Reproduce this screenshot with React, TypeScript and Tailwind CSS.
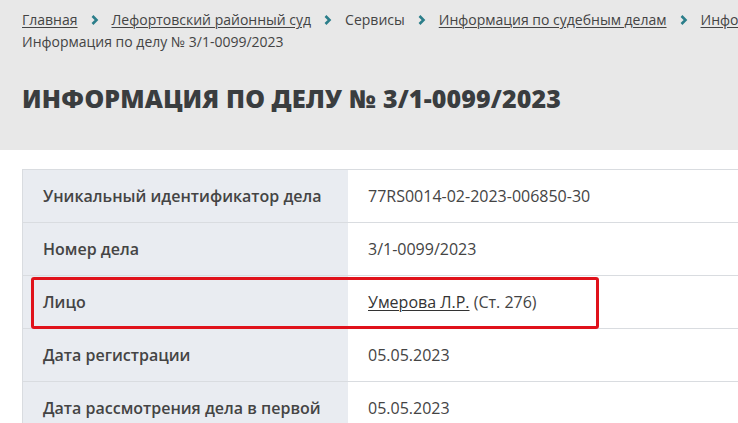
import React from 'react';

const crumbs = [
  { label: 'Главная', link: true },
  { label: 'Лефортовский районный суд', link: true },
  { label: 'Сервисы', link: false },
  { label: 'Информация по судебным делам', link: true },
  { label: 'Информация по делу № 3/1-0099/2023', link: true },
];

const rows: { label: string; value: React.ReactNode; marked?: boolean }[] = [
  { label: 'Уникальный идентификатор дела', value: '77RS0014-02-2023-006850-30' },
  { label: 'Номер дела', value: '3/1-0099/2023' },
  {
    label: 'Лицо',
    value: (
      <span>
        <a className="underline underline-offset-2 decoration-1 text-[#333]" href="#">Умерова Л.Р.</a>
        {' '}(Ст. 276)
      </span>
    ),
    marked: true,
  },
  { label: 'Дата регистрации', value: '05.05.2023' },
  { label: 'Дата рассмотрения дела в первой', value: '05.05.2023' },
];

function Chevron() {
  return (
    <svg width="8" height="10" viewBox="0 0 8 10" className="mx-[13px] shrink-0">
      <path d="M1.5 1 L5.5 5 L1.5 9" fill="none" stroke="#2b7e8a" strokeWidth="2.6" />
    </svg>
  );
}

export default function App() {
  return (
    <div className="w-[738px] h-[423px] overflow-hidden bg-white font-['Open_Sans',sans-serif] text-[#333]">
      {/* Header */}
      <div className="bg-[#e8e8e8] h-[150px] px-[22px] pt-[9px] overflow-hidden">
        <div className="flex items-center whitespace-nowrap text-[14px] leading-[22px] text-[#444]">
          {crumbs.map((c, i) => (
            <React.Fragment key={i}>
              {i > 0 && <Chevron />}
              <span className={c.link ? 'underline underline-offset-2 decoration-1' : ''}>{c.label}</span>
            </React.Fragment>
          ))}
        </div>
        <div className="text-[14px] leading-[22px] text-[#444]">Информация по делу № 3/1-0099/2023</div>
        <h1 className="mt-[29px] font-['Noto_Sans',sans-serif] font-black uppercase text-[25px] leading-[32px] tracking-[0.005em] text-[#3a3d3f] whitespace-nowrap">
          Информация по делу № 3/1-0099/2023
        </h1>
      </div>

      {/* Table */}
      <div className="ml-[22px] mt-[19px] w-[760px] border-t border-l border-[#d9dce0]">
        {rows.map((r, i) => (
          <div key={i} className="relative flex h-[53px] border-b border-[#d9dce0]">
            <div className="w-[325px] shrink-0 bg-[#e9ecf1] pl-[20px] flex items-center text-[16px] font-semibold text-[#444]">
              {r.label}
            </div>
            <div className="flex-1 pl-[20px] flex items-center text-[16px] text-[#444]">{r.value}</div>
            {r.marked && (
              <div className="absolute left-[8px] top-[1px] w-[568px] h-[52px] border-[3px] border-[#e0121b] rounded-[3px]" />
            )}
          </div>
        ))}
      </div>
    </div>
  );
}
